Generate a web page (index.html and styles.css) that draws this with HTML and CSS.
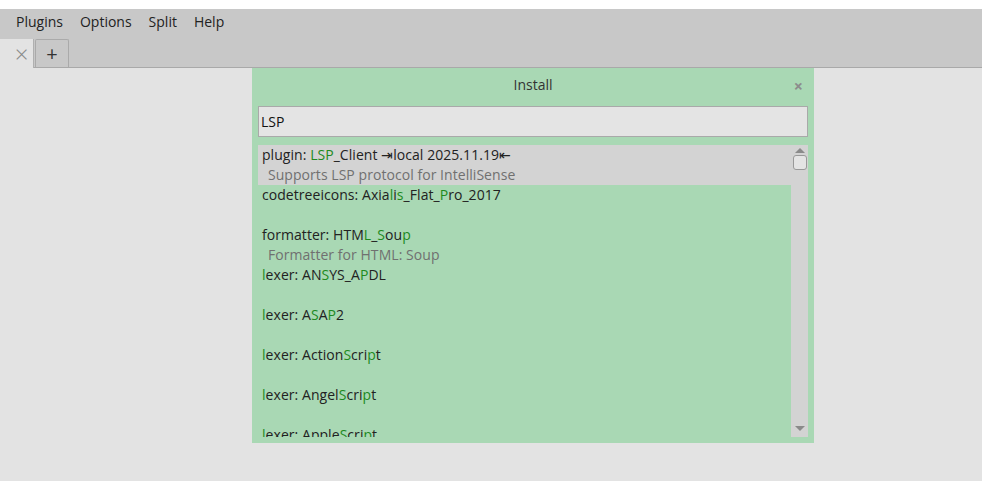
FILE: index.html
```html
<!DOCTYPE html>
<html>
<head>
<meta charset="utf-8">
<link rel="stylesheet" href="styles.css">
</head>
<body>
<div class="topstrip"></div>
<div class="menubar">
  <span class="menu">Plugins</span>
  <span class="menu">Options</span>
  <span class="menu">Split</span>
  <span class="menu">Help</span>
</div>
<div class="tabbar">
  <div class="tab active">×</div>
  <div class="tab add">+</div>
</div>
<div class="content">
  <div class="dialog">
    <div class="title">Install<span class="close">×</span></div>
    <div class="input">LSP</div>
    <div class="list">
      <div class="items">
        <div class="item sel"><div class="name">plugin: <b>LSP</b>_Client ⇥local 2025.11.19⇤</div><div class="desc">Supports LSP protocol for IntelliSense</div></div>
        <div class="item"><div class="name">codetreeicons: Axia<b>l</b>i<b>s</b>_Flat_<b>P</b>ro_2017</div><div class="desc"></div></div>
        <div class="item"><div class="name">formatter: HTM<b>L</b>_<b>S</b>ou<b>p</b></div><div class="desc">Formatter for HTML: Soup</div></div>
        <div class="item"><div class="name"><b>l</b>exer: AN<b>S</b>YS_A<b>P</b>DL</div><div class="desc"></div></div>
        <div class="item"><div class="name"><b>l</b>exer: A<b>S</b>A<b>P</b>2</div><div class="desc"></div></div>
        <div class="item"><div class="name"><b>l</b>exer: Action<b>S</b>cri<b>p</b>t</div><div class="desc"></div></div>
        <div class="item"><div class="name"><b>l</b>exer: Angel<b>S</b>cri<b>p</b>t</div><div class="desc"></div></div>
        <div class="item"><div class="name"><b>l</b>exer: Apple<b>S</b>cri<b>p</b>t</div><div class="desc"></div></div>
      </div>
      <div class="scrollbar">
        <div class="arrow up"></div>
        <div class="thumb"></div>
        <div class="track"></div>
        <div class="arrow down"></div>
      </div>
    </div>
  </div>
</div>
</body>
</html>
```
FILE: styles.css
```css
html, body {
  margin: 0;
  padding: 0;
}
body {
  background: #e3e3e3;
  font-family: "Open Sans", "Noto Sans", sans-serif;
  font-size: 13px;
  color: #222;
  width: 982px;
  height: 481px;
  overflow: hidden;
}
.topstrip {
  height: 9px;
  background: #ffffff;
}
.menubar {
  height: 29px;
  box-sizing: border-box;
  padding-bottom: 4px;
  background: #c8c8c8;
  display: flex;
  align-items: center;
  padding-left: 16px;
  font-size: 14px;
}
.menu {
  margin-right: 17px;
}
.tabbar {
  height: 29px;
  background: #c8c8c8;
  display: flex;
  align-items: flex-end;
  border-bottom: 1px solid #a9a9a9;
}
.tab {
  width: 33px;
  height: 28px;
  display: flex;
  align-items: center;
  justify-content: center;
  box-sizing: border-box;
  font-size: 20px;
  line-height: 1;
}
.tab.active {
  background: #e3e3e3;
  color: #8a8a8a;
  margin-bottom: -1px;
  height: 29px;
  width: 34px;
  padding-left: 10px;
  font-size: 24px;
  font-weight: 300;
  border-right: 1px solid #b0b0b0;
}
.tab.add {
  width: 34px;
  border: 1px solid #aaaaaa;
  border-bottom: none;
  border-radius: 2px 2px 0 0;
  margin-left: 1px;
  color: #333;
  font-size: 20px;
}
.content {
  display: flex;
}
.dialog {
  margin-left: 252px;
  width: 562px;
  height: 375px;
  background: #a9d8b4;
  box-sizing: border-box;
  padding: 0 6px 6px 6px;
  display: flex;
  flex-direction: column;
}
.title {
  height: 33px;
  display: flex;
  align-items: center;
  justify-content: center;
  position: relative;
  font-size: 14px;
  color: #333;
}
.close {
  position: absolute;
  right: 5px;
  top: 7px;
  color: #8c8c8c;
  font-size: 16px;
  font-weight: bold;
}
.input {
  margin-top: 5px;
  height: 31px;
  box-sizing: border-box;
  background: #e4e4e4;
  border: 1px solid #a9a9a9;
  padding-left: 2px;
  display: flex;
  align-items: center;
  font-size: 14px;
  color: #111;
}
.list {
  margin-top: 8px;
  flex: 1;
  display: flex;
  overflow: hidden;
}
.items {
  flex: 1;
  overflow: hidden;
}
.item {
  padding-left: 4px;
}
.item.sel {
  background: #d3d3d3;
}
.name, .desc {
  height: 20px;
  line-height: 20px;
  white-space: nowrap;
  font-size: 14px;
  letter-spacing: 0.05px;
}
.name b {
  font-weight: normal;
  color: #1e8a1e;
}
.desc {
  color: #707070;
  padding-left: 6px;
}
.scrollbar {
  width: 17px;
  background: #d3d3d3;
  display: flex;
  flex-direction: column;
  align-items: center;
}
.arrow {
  width: 0;
  height: 0;
  border-left: 5px solid transparent;
  border-right: 5px solid transparent;
}
.arrow.up {
  margin-top: 3px;
  border-bottom: 5px solid #8a8a8a;
}
.arrow.down {
  margin-bottom: 6px;
  border-top: 5px solid #8a8a8a;
}
.thumb {
  margin-top: 2px;
  width: 14px;
  height: 15px;
  box-sizing: border-box;
  background: #e4e4e4;
  border: 1px solid #999;
  border-radius: 3px;
}
.track {
  flex: 1;
}
```
